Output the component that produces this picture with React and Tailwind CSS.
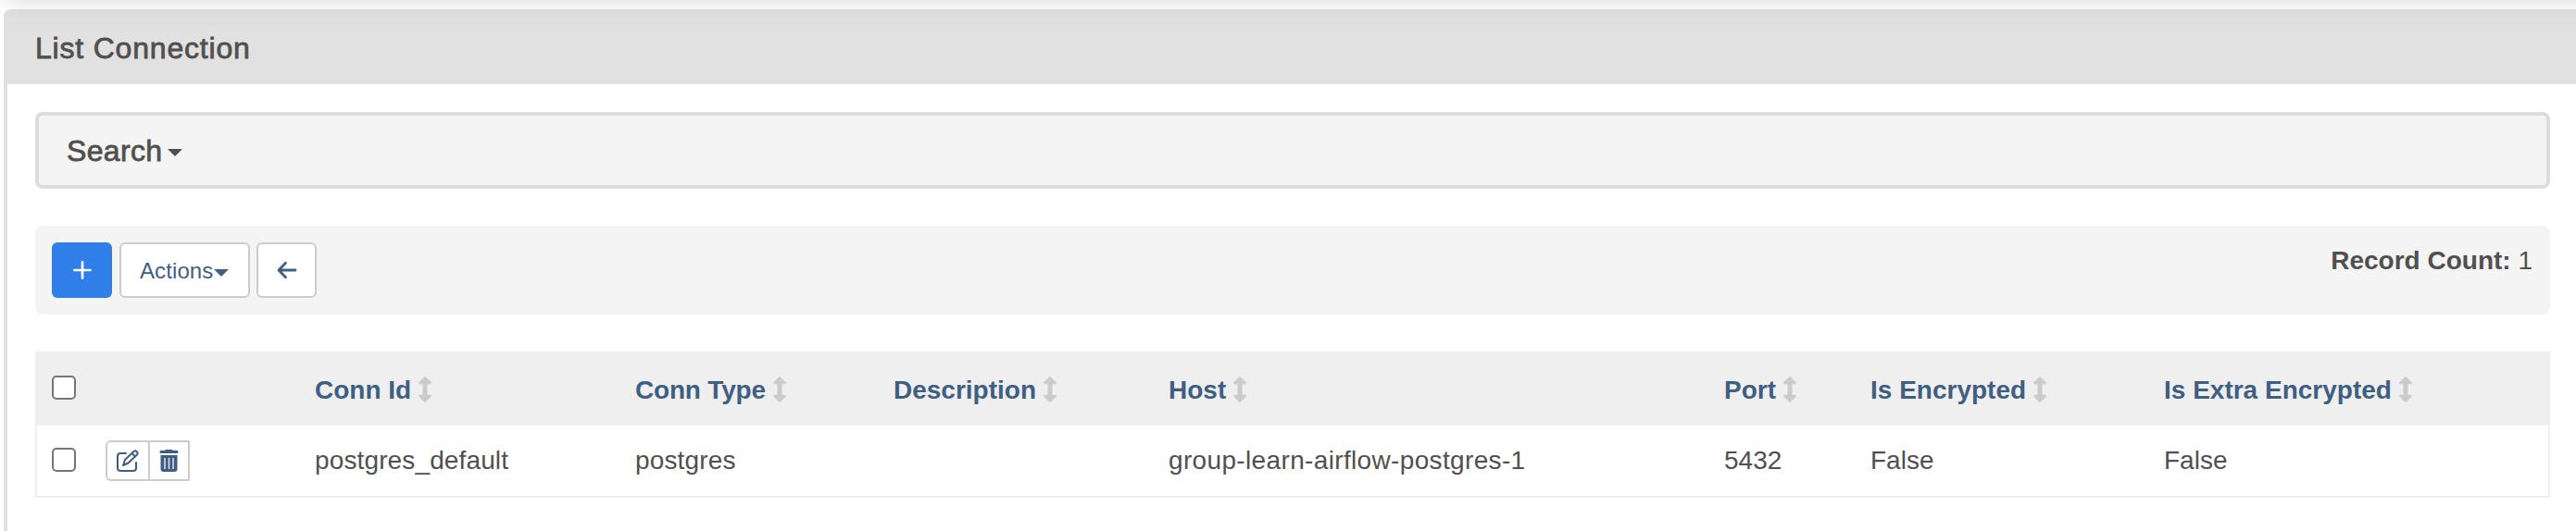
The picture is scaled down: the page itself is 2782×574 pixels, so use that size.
import React from "react";

const COLUMNS = [
  { label: "Conn Id", value: "postgres_default", width: "w-[346px]", gap: "gap-2", ls: "", vls: "tracking-[0.13px]" },
  { label: "Conn Type", value: "postgres", width: "w-[279px]", gap: "gap-2", ls: "tracking-[-0.2px]", vls: "tracking-[0.15px]" },
  { label: "Description", value: "", width: "w-[297px]", gap: "gap-2", ls: "", vls: "" },
  { label: "Host", value: "group-learn-airflow-postgres-1", width: "w-[600px]", gap: "gap-2", ls: "", vls: "tracking-[0.35px]" },
  { label: "Port", value: "5432", width: "w-[158px]", gap: "gap-2", ls: "", vls: "" },
  { label: "Is Encrypted", value: "False", width: "w-[317px]", gap: "gap-2", ls: "", vls: "" },
  { label: "Is Extra Encrypted", value: "False", width: "w-[300px]", gap: "gap-2", ls: "", vls: "" },
];

function SortIcon() {
  return (
    <svg className="mt-[1px] h-7 w-[14px] shrink-0" viewBox="0 0 14 28" fill="#cbcbcb">
      <path d="M6.200.4Q7-.2 7.800.4L13.600 6.300Q14.300 8 12.800 8.200H9.500V19.800H12.800Q14.300 20 13.600 21.700L7.800 27.600Q7 28.200 6.200 27.600L.4 21.700Q-.3 20 1.200 19.800H4.500V8.200H1.200Q-.3 8 .4 6.300Z" />
    </svg>
  );
}

function Checkbox() {
  return <span className="block h-[26px] w-[26px] rounded-[5px] border-2 border-[#767676] bg-white" />;
}

export default function App() {
  return (
    <div className="relative h-[574px] w-[2782px] overflow-hidden bg-white pt-[10px] pl-1 font-['Liberation_Sans',Arial,sans-serif] text-[#51504f]">
      <div className="h-[600px] w-[2790px] rounded-tl-[8px] border-4 border-[#e1e1e1]">
        <div className="flex h-[77px] items-center bg-[#e1e1e1] pl-[30px]">
          <h1 className="mt-[-1px] text-[32px] leading-9 tracking-[0.8px] [-webkit-text-stroke:0.8px_#51504f]">List Connection</h1>
        </div>
        <div className="w-[2746px] pt-[30px] pl-[30px]">
          <div className="flex h-[83px] items-center rounded-[8px] border-4 border-[#dddddd] bg-[#f4f4f4] pl-[30px]">
            <span className="text-[32px] leading-9 tracking-[0.35px] [-webkit-text-stroke:0.8px_#51504f]">Search</span>
            <svg className="mt-[5px] ml-[5px] h-2 w-4" viewBox="0 0 16 8" fill="#51504f"><path d="M0 0H16L8 8Z" /></svg>
          </div>
          <div className="mt-10 flex h-24 items-start rounded-[8px] bg-[#f4f4f4] pt-[18px] pl-[18px] pr-[19px]">
            <button className="flex h-[60px] w-[65px] items-center justify-center rounded-[6px] bg-[#307fe8]">
              <svg className="h-5 w-5" viewBox="0 0 20 20" stroke="#fff" strokeWidth="2.700" strokeLinecap="round"><path d="M10 1.400V18.600M1.400 10H18.600" /></svg>
            </button>
            <button className="ml-2 flex h-[60px] w-[141px] items-center rounded-[6px] border-2 border-[#cccccc] bg-white pl-5 text-[24px] text-[#3f5f82]">
              <span className="mt-[2px] tracking-[0.1px]">Actions</span>
              <svg className="mt-[5px] ml-[1px] h-2 w-4" viewBox="0 0 16 8" fill="#3f5f82"><path d="M0 0H16L8 8Z" /></svg>
            </button>
            <button className="ml-[7px] flex h-[60px] w-[65px] items-center justify-center rounded-[6px] border-2 border-[#cccccc] bg-white">
              <svg className="h-5 w-[22px]" viewBox="0 0 22 20" fill="none" stroke="#3f5f82" strokeWidth="2.800" strokeLinecap="round" strokeLinejoin="round"><path d="M20 10H2M9.500 2.300 2 10 9.500 17.700" /></svg>
            </button>
            <div className="mt-[4px] ml-auto text-[28px] leading-8">
              <strong>Record Count:</strong> 1
            </div>
          </div>
          <div className="mt-10">
            <div className="flex h-20 bg-[#efefef] pl-[18px] text-[#3f5f82]">
              <div className="w-[284px] pt-[26px]"><Checkbox /></div>
              {COLUMNS.map((c) => (
                <div key={c.label} className={`flex shrink-0 items-start pt-[26px] text-[28px] leading-8 font-bold ${c.width} ${c.gap}`}>
                  <span className={`whitespace-nowrap ${c.ls}`}>{c.label}</span>
                  <SortIcon />
                </div>
              ))}
            </div>
            <div className="flex h-[78px] border-x-2 border-b-2 border-[#efefef] pl-4">
              <div className="flex w-[284px]">
                <div className="w-[58px] pt-6"><Checkbox /></div>
                <div className="mt-4 flex h-11 w-[91px] rounded-l-[6px] border-2 border-[#cccccc]">
                  <div className="flex w-[46px] shrink-0 items-center justify-center border-r-2 border-[#cccccc]">
                    <svg className="h-6 w-6" viewBox="0 0 24 24" fill="none" stroke="#3f5f82" strokeWidth="2" strokeLinecap="round" strokeLinejoin="round">
                      <path d="M10 4H4Q1 4 1 7V20Q1 23 4 23H18Q21 23 21 20V14" />
                      <path d="M7 17 9 11 18.500 2Q20 .7 21.500 2 23.500 4 22 5.500L12.500 14.500ZM16.500 4 20 7.500" />
                    </svg>
                  </div>
                  <div className="flex flex-1 items-center justify-center">
                    <svg className="h-6 w-[21px]" viewBox="0 0 21 24">
                      <path fill="#3f5f82" d="M7 0H14L15 1H20Q21 2 20 4H1Q0 2 1 1H6ZM1.500 6H19.500V21Q19.500 24 16.500 24H4.500Q1.500 24 1.500 21Z" />
                      <path stroke="#dfe4ea" strokeWidth="1.500" d="M6 9V21M10.500 9V21M15 9V21" />
                    </svg>
                  </div>
                </div>
              </div>
              {COLUMNS.map((c) => (
                <div key={c.label} className={`shrink-0 pt-[22px] text-[28px] leading-8 whitespace-nowrap ${c.width} ${c.vls}`}>{c.value}</div>
              ))}
            </div>
          </div>
        </div>
      </div>
      <div className="pointer-events-none absolute top-0 left-0 h-8 w-full bg-[linear-gradient(to_bottom,rgba(0,0,0,0.08),rgba(0,0,0,0.04)_8px,rgba(0,0,0,0.022)_13px,transparent_30px)] [mask-image:linear-gradient(to_right,rgba(0,0,0,0.3),black_24px)]" />
    </div>
  );
}
